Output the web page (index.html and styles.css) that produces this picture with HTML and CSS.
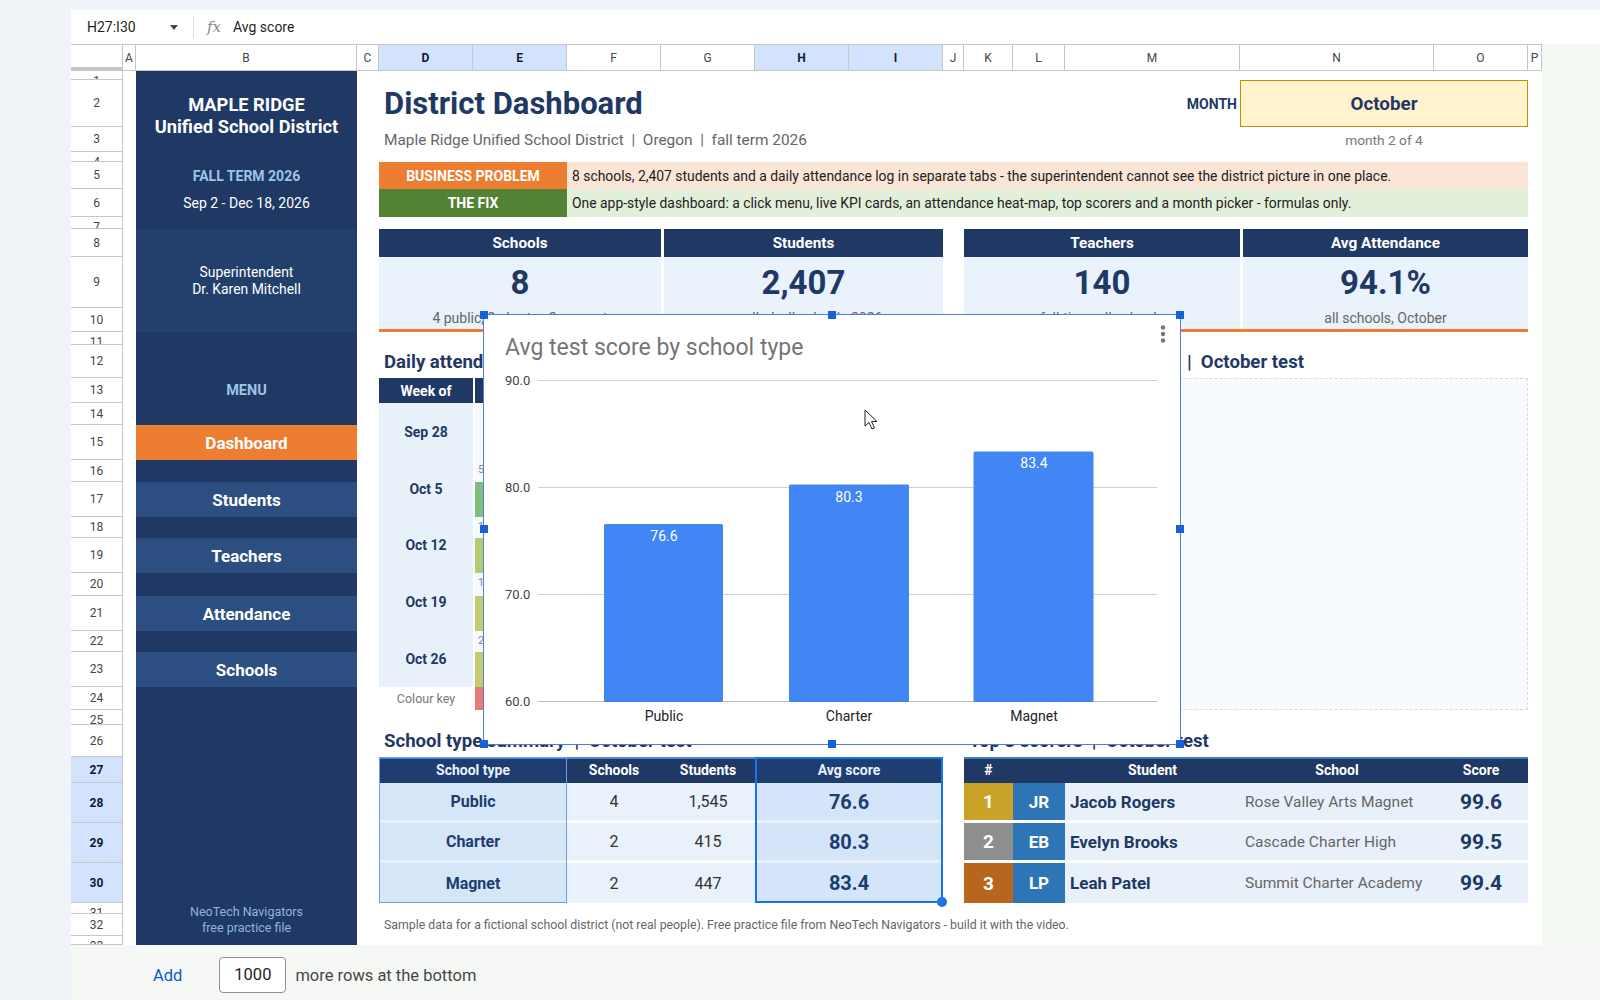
FILE: index.html
```html
<!DOCTYPE html>
<html lang="en">
<head>
  <meta charset="UTF-8">
  <meta name="viewport" content="width=device-width, initial-scale=1.0">
  <title>District Dashboard - Sheets</title>
  <link rel="stylesheet" href="styles.css">
</head>
<body>
  <div class="top-strip"></div>

  <div class="formula-bar">
    <div class="name-box">H27:I30</div>
    <span class="caret"></span>
    <span class="divider"></span>
    <span class="fx">fx</span>
    <span class="formula">Avg score</span>
  </div>

  <div class="workspace">
    <div class="sheet">
      <!-- headers -->
      <div class="corner"></div>
      <div class="ch">A</div>
      <div class="ch">B</div>
      <div class="ch">C</div>
      <div class="ch sel">D</div>
      <div class="ch sel">E</div>
      <div class="ch">F</div>
      <div class="ch">G</div>
      <div class="ch sel">H</div>
      <div class="ch sel">I</div>
      <div class="ch">J</div>
      <div class="ch">K</div>
      <div class="ch">L</div>
      <div class="ch">M</div>
      <div class="ch">N</div>
      <div class="ch">O</div>
      <div class="ch">P</div>

      <div class="rh"><span>1</span></div>
      <div class="rh"><span>2</span></div>
      <div class="rh"><span>3</span></div>
      <div class="rh"><span>4</span></div>
      <div class="rh"><span>5</span></div>
      <div class="rh"><span>6</span></div>
      <div class="rh"><span>7</span></div>
      <div class="rh"><span>8</span></div>
      <div class="rh"><span>9</span></div>
      <div class="rh"><span>10</span></div>
      <div class="rh"><span>11</span></div>
      <div class="rh"><span>12</span></div>
      <div class="rh"><span>13</span></div>
      <div class="rh"><span>14</span></div>
      <div class="rh"><span>15</span></div>
      <div class="rh"><span>16</span></div>
      <div class="rh"><span>17</span></div>
      <div class="rh"><span>18</span></div>
      <div class="rh"><span>19</span></div>
      <div class="rh"><span>20</span></div>
      <div class="rh"><span>21</span></div>
      <div class="rh"><span>22</span></div>
      <div class="rh"><span>23</span></div>
      <div class="rh"><span>24</span></div>
      <div class="rh"><span>25</span></div>
      <div class="rh"><span>26</span></div>
      <div class="rh sel"><span>27</span></div>
      <div class="rh sel"><span>28</span></div>
      <div class="rh sel"><span>29</span></div>
      <div class="rh sel"><span>30</span></div>
      <div class="rh"><span>31</span></div>
      <div class="rh"><span>32</span></div>
      <div class="rh"><span>33</span></div>

      <!-- sidebar -->
      <div class="side cB r1-33"></div>
      <div class="cell side-title cB r2-3"><span>MAPLE RIDGE<br>Unified School District</span></div>
      <div class="cell side-term cB r5">FALL TERM 2026</div>
      <div class="cell side-dates cB r6">Sep 2 - Dec 18, 2026</div>
      <div class="cell side-super cB r8-10"><span>Superintendent<br>Dr. Karen Mitchell</span></div>
      <div class="cell side-menu cB r13">MENU</div>
      <div class="cell nav active cB r15">Dashboard</div>
      <div class="cell nav cB r17">Students</div>
      <div class="cell nav cB r19">Teachers</div>
      <div class="cell nav cB r21">Attendance</div>
      <div class="cell nav cB r23">Schools</div>
      <div class="cell side-credit cB r31-32"><span>NeoTech Navigators<br>free practice file</span></div>

      <!-- title block -->
      <div class="cell left title cDL r2">District Dashboard</div>
      <div class="cell left subtitle cDL r3">Maple Ridge Unified School District  |  Oregon  |  fall term 2026</div>
      <div class="cell month-label cM r2">MONTH</div>
      <div class="cell month-box cNO r2">October</div>
      <div class="cell month-note cNO r3">month 2 of 4</div>

      <div class="cell tag tag-problem cDE r5">BUSINESS PROBLEM</div>
      <div class="cell left tag-text problem-text cFO r5">8 schools, 2,407 students and a daily attendance log in separate tabs - the superintendent cannot see the district picture in one place.</div>
      <div class="cell tag tag-fix cDE r6">THE FIX</div>
      <div class="cell left tag-text fix-text cFO r6">One app-style dashboard: a click menu, live KPI cards, an attendance heat-map, top scorers and a month picker - formulas only.</div>

      <!-- KPI cards -->
      <div class="cell kpi-head cDF r8">Schools</div>
      <div class="cell kpi-value cDF r9">8</div>
      <div class="cell kpi-sub cDF r10">4 public, 2 charter, 2 magnet</div>

      <div class="cell kpi-head split cGI r8">Students</div>
      <div class="cell kpi-value split cGI r9">2,407</div>
      <div class="cell kpi-sub split cGI r10">enrolled, all schools 2026</div>

      <div class="cell kpi-head cKM r8">Teachers</div>
      <div class="cell kpi-value cKM r9">140</div>
      <div class="cell kpi-sub cKM r10">full-time, all schools</div>

      <div class="cell kpi-head split cNO r8">Avg Attendance</div>
      <div class="cell kpi-value split cNO r9">94.1%</div>
      <div class="cell kpi-sub split cNO r10">all schools, October</div>

      <div class="kpi-line cDI r10"></div>
      <div class="kpi-line cKO r10"></div>

      <!-- attendance heat-map -->
      <div class="cell left section-head cDI r12">Daily attendance heat-map  |  October</div>
      <div class="cell left section-head cKO r12">Average score by school   |  October test</div>

      <div class="cell grid-head cD r13">Week of</div>
      <div class="cell grid-head day-head cE r13">Mon</div>
      <div class="cell grid-head day-head cF r13">Tue</div>
      <div class="cell grid-head day-head cG r13">Wed</div>
      <div class="cell grid-head day-head cH r13">Thu</div>
      <div class="cell grid-head day-head cI r13">Fri</div>

      <div class="cell week cD w1">Sep 28</div>
      <div class="day cE w1"><span class="dnum"></span><span class="bar blank"></span></div>
      <div class="day cF w1"><span class="dnum"></span><span class="bar blank"></span></div>
      <div class="day cG w1"><span class="dnum"></span><span class="bar blank"></span></div>
      <div class="day cH w1"><span class="dnum">1</span><span class="bar h6">95.8%</span></div>
      <div class="day cI w1"><span class="dnum">2</span><span class="bar h5">94.6%</span></div>

      <div class="cell week cD w2">Oct 5</div>
      <div class="day cE w2"><span class="dnum">5</span><span class="bar h6">96.1%</span></div>
      <div class="day cF w2"><span class="dnum">6</span><span class="bar h6">95.4%</span></div>
      <div class="day cG w2"><span class="dnum">7</span><span class="bar h5">94.9%</span></div>
      <div class="day cH w2"><span class="dnum">8</span><span class="bar h6">95.2%</span></div>
      <div class="day cI w2"><span class="dnum">9</span><span class="bar h4">93.8%</span></div>

      <div class="cell week cD w3">Oct 12</div>
      <div class="day cE w3"><span class="dnum">12</span><span class="bar h5">94.3%</span></div>
      <div class="day cF w3"><span class="dnum">13</span><span class="bar h5">94.8%</span></div>
      <div class="day cG w3"><span class="dnum">14</span><span class="bar h4">93.9%</span></div>
      <div class="day cH w3"><span class="dnum">15</span><span class="bar h5">94.1%</span></div>
      <div class="day cI w3"><span class="dnum">16</span><span class="bar h3">92.6%</span></div>

      <div class="cell week cD w4">Oct 19</div>
      <div class="day cE w4"><span class="dnum">19</span><span class="bar h4">93.7%</span></div>
      <div class="day cF w4"><span class="dnum">20</span><span class="bar h5">94.2%</span></div>
      <div class="day cG w4"><span class="dnum">21</span><span class="bar h4">93.5%</span></div>
      <div class="day cH w4"><span class="dnum">22</span><span class="bar h5">94.0%</span></div>
      <div class="day cI w4"><span class="dnum">23</span><span class="bar h3">92.1%</span></div>

      <div class="cell week cD w5">Oct 26</div>
      <div class="day cE w5"><span class="dnum">26</span><span class="bar h4">93.9%</span></div>
      <div class="day cF w5"><span class="dnum">27</span><span class="bar h5">94.4%</span></div>
      <div class="day cG w5"><span class="dnum">28</span><span class="bar h4">93.6%</span></div>
      <div class="day cH w5"><span class="dnum">29</span><span class="bar h3">92.8%</span></div>
      <div class="day cI w5"><span class="dnum">30</span><span class="bar h2">91.2%</span></div>

      <div class="cell key-label cD r24">Colour key</div>
      <div class="cell key h1 cE r24">&lt; 91%</div>
      <div class="cell key h2 cF r24">92%</div>
      <div class="cell key h3 cG r24">93%</div>
      <div class="cell key h5 cH r24">94%</div>
      <div class="cell key h6 cI r24">96%+</div>

      <div class="placeholder cKO r13-24"></div>

      <!-- school type summary -->
      <div class="cell left section-head cDI r26">School type summary  |  October test</div>
      <div class="cell left section-head cKO r26">Top 3 scorers  |  October test</div>

      <div class="cell th cDE r27">School type</div>
      <div class="cell th cF r27">Schools</div>
      <div class="cell th cG r27">Students</div>
      <div class="cell th cHI r27">Avg score</div>

      <div class="cell td td-type cDE r28">Public</div>
      <div class="cell td td-num cF r28">4</div>
      <div class="cell td td-num cG r28">1,545</div>
      <div class="cell td td-avg cHI r28">76.6</div>

      <div class="cell td td-type cDE r29">Charter</div>
      <div class="cell td td-num cF r29">2</div>
      <div class="cell td td-num cG r29">415</div>
      <div class="cell td td-avg cHI r29">80.3</div>

      <div class="cell td last td-type cDE r30">Magnet</div>
      <div class="cell td last td-num cF r30">2</div>
      <div class="cell td last td-num cG r30">447</div>
      <div class="cell td last td-avg cHI r30">83.4</div>

      <div class="hl-head cDI r27"></div>
      <div class="hl-labels cDE r27-30"></div>
      <div class="selection cHI r27-30"></div>

      <!-- top scorers -->
      <div class="cell th th-top cK r27">#</div>
      <div class="cell th th-top cL r27"></div>
      <div class="cell th th-top cM r27">Student</div>
      <div class="cell th th-top cN r27">School</div>
      <div class="cell th th-top cO r27">Score</div>

      <div class="cell rank gold cK r28">1</div>
      <div class="cell initials cL r28">JR</div>
      <div class="cell left scorer cM r28">Jacob Rogers</div>
      <div class="cell left school cN r28">Rose Valley Arts Magnet</div>
      <div class="cell score cO r28">99.6</div>

      <div class="cell rank silver cK r29">2</div>
      <div class="cell initials cL r29">EB</div>
      <div class="cell left scorer cM r29">Evelyn Brooks</div>
      <div class="cell left school cN r29">Cascade Charter High</div>
      <div class="cell score cO r29">99.5</div>

      <div class="cell rank bronze last cK r30">3</div>
      <div class="cell initials last cL r30">LP</div>
      <div class="cell left scorer last cM r30">Leah Patel</div>
      <div class="cell left school last cN r30">Summit Charter Academy</div>
      <div class="cell score last cO r30">99.4</div>

      <div class="cell left note cDO r32">Sample data for a fictional school district (not real people). Free practice file from NeoTech Navigators - build it with the video.</div>

      <!-- floating chart -->
      <div class="chart">
        <svg width="696" height="429" viewBox="0 0 696 429">
          <text class="chart-title" x="21" y="40">Avg test score by school type</text>
          <circle cx="679" cy="12.5" r="2.2" fill="#777"/>
          <circle cx="679" cy="19" r="2.2" fill="#777"/>
          <circle cx="679" cy="25.5" r="2.2" fill="#777"/>

          <g stroke="#d0d0d0" stroke-width="1">
            <line x1="54" y1="65.5" x2="673" y2="65.5"/>
            <line x1="54" y1="172.5" x2="673" y2="172.5"/>
            <line x1="54" y1="279.5" x2="673" y2="279.5"/>
            <line x1="54" y1="386.5" x2="673" y2="386.5" stroke="#bdbdbd"/>
          </g>
          <g class="axis">
            <text x="21" y="70">90.0</text>
            <text x="21" y="177">80.0</text>
            <text x="21" y="284">70.0</text>
            <text x="21" y="391">60.0</text>
          </g>

          <g fill="#4285f4">
            <rect x="120" y="209" width="119" height="178" rx="1.5"/>
            <rect x="305" y="169.5" width="120" height="217.5" rx="1.5"/>
            <rect x="489.5" y="136.5" width="120" height="250.5" rx="1.5"/>
          </g>
          <g class="bar-label">
            <text x="180" y="226">76.6</text>
            <text x="365" y="187">80.3</text>
            <text x="550" y="153">83.4</text>
          </g>
          <g class="cat-label">
            <text x="180" y="406">Public</text>
            <text x="365" y="406">Charter</text>
            <text x="550" y="406">Magnet</text>
          </g>

          <path d="M381 95 L381 111 L385 107.5 L388 114 L390.5 113 L387.5 106.5 L393 106.5 Z" fill="#fff" stroke="#222" stroke-width="1" stroke-linejoin="round"/>
        </svg>
        <span class="handle h-tl"></span>
        <span class="handle h-tc"></span>
        <span class="handle h-tr"></span>
        <span class="handle h-ml"></span>
        <span class="handle h-mr"></span>
        <span class="handle h-bl"></span>
        <span class="handle h-bc"></span>
        <span class="handle h-br"></span>
      </div>
    </div>
    <div class="right-fill"></div>
  </div>

  <div class="add-rows">
    <span class="add-link">Add</span>
    <span class="add-count">1000</span>
    <span class="add-text">more rows at the bottom</span>
  </div>
</body>
</html>
```

FILE: styles.css
```css
* {
  box-sizing: border-box;
}
body {
  margin: 0;
  width: 1600px;
  height: 1000px;
  overflow: hidden;
  background: #f0f4f9;
  font-family: Roboto, "Liberation Sans", Arial, sans-serif;
  color: #1f1f1f;
}

/* toolbar */
.top-strip {
  height: 10px;
}
.formula-bar {
  display: flex;
  align-items: center;
  height: 34px;
  margin-left: 71px;
  background: #fff;
  font-size: 14px;
}
.name-box {
  width: 99px;
  padding-left: 16px;
}
.caret {
  border-left: 4.5px solid transparent;
  border-right: 4.5px solid transparent;
  border-top: 5px solid #444746;
}
.divider {
  width: 1px;
  height: 22px;
  margin-left: 15px;
  background: #dadce0;
}
.fx {
  margin-left: 13px;
  font-family: "DejaVu Serif", serif;
  font-style: italic;
  font-size: 15px;
  color: #80868b;
}
.formula {
  margin-left: 12px;
}

.workspace {
  display: flex;
  height: 901px;
  margin-left: 71px;
}
.right-fill {
  flex: 1;
  background: #f4f8f3;
}

/* the grid */
.sheet {
  position: relative;
  display: grid;
  grid-template-columns: 52px 13px 221px 22px 94px 94px 94px 94px 94px 94px 21px 49px 52px 175px 194px 94px 14px;
  grid-template-rows: 27px 9px 47px 25px 10px 27px 28px 12px 28px 51px 24px 13px 33px 25px 22px 35px 22px 35px 21px 35px 23px 35px 21px 35px 23px 15px 32px 26px 40px 40px 40px 11px 22px 9px;
  width: 1471px;
  background: #fff;
}
.corner {
  grid-column: 1;
  grid-row: 1;
  border-top: 1px solid #c4c7c5;
  border-right: 1px solid #c4c7c5;
  border-bottom: 4px solid #c4c7c5;
}
.ch {
  grid-row: 1;
  display: flex;
  align-items: center;
  justify-content: center;
  border-top: 1px solid #c4c7c5;
  border-right: 1px solid #c4c7c5;
  border-bottom: 1px solid #c4c7c5;
  font-size: 12px;
  color: #444746;
}
.rh {
  grid-column: 1;
  display: flex;
  justify-content: center;
  overflow: hidden;
  border-right: 1px solid #c4c7c5;
  border-bottom: 1px solid #c4c7c5;
  font-size: 12px;
  color: #444746;
}
.rh span {
  margin: auto 0;
  line-height: 20px;
}
.ch.sel,
.rh.sel {
  background: #d3e3fd;
  color: #0b1a33;
  font-weight: 700;
}

/* placement helpers */
.cB { grid-column: 3; }
.cD { grid-column: 5; }
.cE { grid-column: 6; }
.cF { grid-column: 7; }
.cG { grid-column: 8; }
.cH { grid-column: 9; }
.cI { grid-column: 10; }
.cK { grid-column: 12; }
.cL { grid-column: 13; }
.cM { grid-column: 14; }
.cN { grid-column: 15; }
.cO { grid-column: 16; }
.cDE { grid-column: 5 / 7; }
.cDF { grid-column: 5 / 8; }
.cGI { grid-column: 8 / 11; }
.cHI { grid-column: 9 / 11; }
.cDI { grid-column: 5 / 11; }
.cKM { grid-column: 12 / 15; }
.cNO { grid-column: 15 / 17; }
.cKO { grid-column: 12 / 17; }
.cFO { grid-column: 7 / 17; }
.cDL { grid-column: 5 / 14; }
.cDO { grid-column: 5 / 17; }

.r2 { grid-row: 3; }
.r3 { grid-row: 4; }
.r5 { grid-row: 6; }
.r6 { grid-row: 7; }
.r8 { grid-row: 9; }
.r9 { grid-row: 10; }
.r10 { grid-row: 11; }
.r12 { grid-row: 13; }
.r13 { grid-row: 14; }
.r15 { grid-row: 16; }
.r17 { grid-row: 18; }
.r19 { grid-row: 20; }
.r21 { grid-row: 22; }
.r23 { grid-row: 24; }
.r24 { grid-row: 25; }
.r26 { grid-row: 27; }
.r27 { grid-row: 28; }
.r28 { grid-row: 29; }
.r29 { grid-row: 30; }
.r30 { grid-row: 31; }
.r32 { grid-row: 33; }
.r1-33 { grid-row: 2 / 35; }
.r2-3 { grid-row: 3 / 5; }
.r8-10 { grid-row: 9 / 12; }
.r13-24 { grid-row: 14 / 26; }
.r27-30 { grid-row: 28 / 32; }
.r31-32 { grid-row: 32 / 34; }
.w1 { grid-row: 15 / 17; }
.w2 { grid-row: 17 / 19; }
.w3 { grid-row: 19 / 21; }
.w4 { grid-row: 21 / 23; }
.w5 { grid-row: 23 / 25; }

.cell {
  display: flex;
  align-items: center;
  justify-content: center;
  text-align: center;
  white-space: nowrap;
}
.cell.left {
  justify-content: flex-start;
  padding-left: 5px;
}

/* sidebar */
.side {
  background: #1f3864;
}
.side-title {
  color: #fff;
  font-size: 18.3px;
  font-weight: 700;
  line-height: 22.5px;
}
.side-term {
  color: #9dc3e6;
  font-size: 14px;
  font-weight: 700;
}
.side-dates {
  color: #fff;
  font-size: 14px;
}
.side-super {
  background: #233f6c;
  color: #fff;
  font-size: 13.9px;
  line-height: 16.5px;
}
.side-menu {
  color: #9dc3e6;
  font-size: 14.5px;
  font-weight: 700;
}
.nav {
  background: #2c4e80;
  color: #fff;
  font-size: 17px;
  font-weight: 700;
}
.nav.active {
  background: #ed7d31;
}
.side-credit {
  color: #8fb4e3;
  font-size: 12.5px;
  line-height: 16px;
}

/* heading block */
.title {
  color: #1f3864;
  font-size: 31px;
  font-weight: 700;
}
.subtitle {
  color: #666;
  font-size: 15.4px;
  white-space: pre;
}
.month-label {
  justify-content: flex-end;
  padding-right: 3px;
  color: #1f3864;
  font-size: 14px;
  font-weight: 700;
}
.month-box {
  background: #fff2cc;
  border: 1.5px solid #bf9000;
  color: #1f3864;
  font-size: 18.8px;
  font-weight: 700;
}
.month-note {
  color: #777;
  font-size: 13.7px;
}
.tag {
  color: #fff;
  font-size: 14px;
  font-weight: 700;
}
.tag-problem { background: #ed7d31; }
.tag-fix { background: #548235; }
.tag-text {
  color: #222;
  font-size: 13.9px;
}
.problem-text { background: #fbe5d6; }
.fix-text { background: #e2efda; }

/* KPI cards */
.kpi-head {
  background: #1f3864;
  color: #fff;
  font-size: 15.3px;
  font-weight: 700;
}
.kpi-value {
  background: #eaf2fb;
  color: #1f3864;
  font-size: 33px;
  font-weight: 700;
}
.kpi-sub {
  align-items: flex-start;
  padding-top: 2px;
  background: #eaf2fb;
  color: #666;
  font-size: 14px;
}
.split {
  border-left: 3px solid #fff;
}
.kpi-line {
  align-self: end;
  height: 3px;
  background: #ed7d31;
}

.section-head {
  color: #1f3864;
  font-size: 18.6px;
  font-weight: 700;
  white-space: pre;
}

/* heat-map */
.grid-head {
  background: #1f3864;
  color: #fff;
  font-size: 14px;
  font-weight: 700;
}
.day-head {
  border-left: 2px solid #fff;
  font-size: 13px;
}
.week {
  background: #e8f1fa;
  color: #1f3864;
  font-size: 14px;
  font-weight: 700;
}
.day {
  display: flex;
  flex-direction: column;
  justify-content: space-between;
  border-left: 2px solid #fff;
  background: #f7fafd;
}
.dnum {
  padding: 3px 0 0 3px;
  color: #888;
  font-size: 11px;
}
.bar {
  display: flex;
  align-items: center;
  justify-content: center;
  height: 35px;
  color: #1f1f1f;
  font-size: 12px;
}
.bar.blank { background: #f7fafd; }
.h1 { background: #e67c73; }
.h2 { background: #f0a56b; }
.h3 { background: #f3cf6c; }
.h4 { background: #c5ca6c; }
.h5 { background: #b3cc6f; }
.h6 { background: #7fbf7b; }
.key-label {
  color: #777;
  font-size: 12.5px;
}
.key {
  border-left: 2px solid #fff;
  font-size: 11px;
  color: #333;
}
.placeholder {
  background: #f8fbfe;
  border: 1px dashed #d4dbe4;
}

/* summary table */
.th {
  background: #1f3864;
  color: #fff;
  font-size: 14px;
  font-weight: 700;
}
.th-top {
  box-shadow: inset 0 2px 0 #3f7cc4;
}
.td {
  background: #e9f2fb;
  border-bottom: 3px solid #fff;
}
.td.last,
.rank.last,
.initials.last,
.scorer.last,
.school.last,
.score.last {
  border-bottom: 0;
}
.td-type {
  color: #1f3864;
  font-size: 16px;
  font-weight: 700;
}
.td-num {
  color: #333;
  font-size: 16px;
}
.td-avg {
  color: #1f3864;
  font-size: 20px;
  font-weight: 700;
}
.hl-head {
  border-top: 2px solid #4f86e0;
}
.hl-labels {
  background: rgba(26, 115, 232, 0.09);
  border: 1px solid #6d9eeb;
}
.selection {
  position: relative;
  background: rgba(26, 115, 232, 0.1);
  border: 2px solid #1a73e8;
}
.selection::after {
  content: "";
  position: absolute;
  right: -6px;
  bottom: -6px;
  width: 10px;
  height: 10px;
  border-radius: 50%;
  background: #1a73e8;
}

/* top scorers */
.rank,
.initials,
.scorer,
.school,
.score {
  border-bottom: 3px solid #fff;
}
.rank {
  color: #fff;
  font-size: 19px;
  font-weight: 700;
}
.gold { background: #c9a227; }
.silver { background: #8e8e8e; }
.bronze { background: #b8651e; }
.initials {
  background: #2e75b6;
  color: #fff;
  font-size: 17px;
  font-weight: 700;
}
.scorer {
  background: #e8f1fa;
  color: #1f3864;
  font-size: 17px;
  font-weight: 700;
}
.school {
  background: #e8f1fa;
  color: #666;
  font-size: 15.5px;
}
.score {
  background: #e8f1fa;
  color: #1f3864;
  font-size: 21px;
  font-weight: 700;
}
.note {
  color: #666;
  font-size: 12.3px;
}

/* chart */
.chart {
  position: absolute;
  left: 413px;
  top: 271px;
  z-index: 5;
  width: 696px;
  height: 429px;
  background: #fff;
  outline: 1px solid #4a80e0;
}
.chart svg {
  display: block;
  font-family: Roboto, "Liberation Sans", Arial, sans-serif;
}
.chart-title {
  font-size: 23px;
  fill: #757575;
}
.axis text {
  font-size: 13px;
  fill: #444;
}
.bar-label text {
  font-size: 14px;
  fill: #fff;
  text-anchor: middle;
}
.cat-label text {
  font-size: 14px;
  fill: #222;
  text-anchor: middle;
}
.handle {
  position: absolute;
  width: 8px;
  height: 8px;
  background: #1a5fd6;
}
.h-tl { left: -4px; top: -4px; }
.h-tc { left: 344px; top: -4px; }
.h-tr { right: -4px; top: -4px; }
.h-ml { left: -4px; top: 210px; }
.h-mr { right: -4px; top: 210px; }
.h-bl { left: -4px; bottom: -4px; }
.h-bc { left: 344px; bottom: -4px; }
.h-br { right: -4px; bottom: -4px; }

/* footer bar */
.add-rows {
  display: flex;
  align-items: center;
  height: 55px;
  margin-left: 71px;
  padding: 5px 0 0 82px;
  background: #f5f8f5;
  font-size: 16.5px;
}
.add-link {
  color: #0b57d0;
}
.add-count {
  margin-left: 37px;
  width: 67px;
  height: 36px;
  line-height: 34px;
  text-align: center;
  border: 1px solid #8e918f;
  border-radius: 4px;
  background: #fff;
}
.add-text {
  margin-left: 9px;
  color: #444746;
}
```
